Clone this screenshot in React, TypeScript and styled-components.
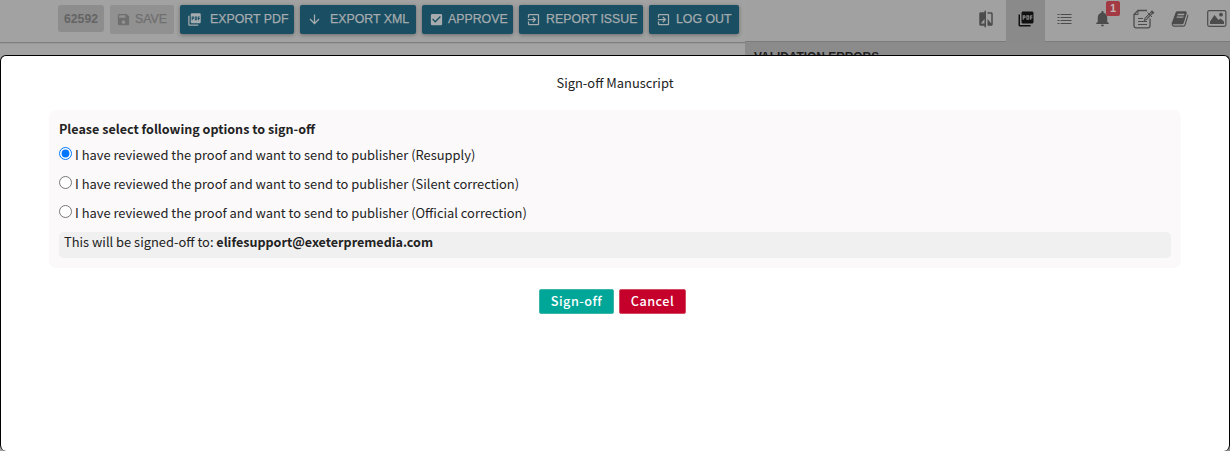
import React, { useState } from "react";
import styled, { createGlobalStyle, css } from "styled-components";
import {
  MdArrowDownward,
  MdCheckBox,
  MdCompare,
  MdExitToApp,
  MdNotifications,
  MdPictureAsPdf,
  MdSave,
} from "react-icons/md";

const sans = `"Liberation Sans", Arial, sans-serif`;
const humanist = `"Noto Sans CJK SC", "Noto Sans", sans-serif`;

const GlobalStyle = createGlobalStyle`
  *, *::before, *::after { box-sizing: border-box; }
  html, body { margin: 0; background: #a3a3a3; overflow: hidden; }
`;

const Page = styled.div`
  position: relative;
  display: grid;
  grid-template-columns: 745px 1fr;
  width: 1230px;
  height: 451px;
  overflow: hidden;
  background: #a3a3a3;
  font-family: ${sans};
`;

const EditorPane = styled.div`
  min-width: 0;
`;

const Toolbar = styled.div`
  display: flex;
  align-items: flex-start;
  height: 43px;
  padding: 5px 0 0 58px;
  border-bottom: 1px solid #7f7f7f;
  box-shadow: 0 1px 1px #999;
  background: #a2a2a2;
`;

const ArticleId = styled.span`
  width: 46px;
  height: 27px;
  margin-right: 6px;
  border-radius: 3px;
  background: #8d8d8d;
  color: #646464;
  font-size: 12.2px;
  font-weight: bold;
  line-height: 28px;
  text-align: center;
`;

const ToolButton = styled.button<{ $width: number; $gap?: number; $muted?: boolean }>`
  display: flex;
  align-items: center;
  gap: ${(p) => p.$gap ?? 5}px;
  width: ${(p) => p.$width}px;
  height: 29px;
  margin: 0 6px 0 0;
  padding: 0 0 2px ${(p) => (p.$muted ? 6 : 7)}px;
  border: 0;
  border-radius: 2px;
  background: #194e63;
  color: #a6abad;
  box-shadow: 0 1px 4px rgba(0, 0, 0, 0.35);
  font-family: ${sans};
  font-size: 12.35px;
  white-space: nowrap;
  -webkit-text-stroke: 0.25px currentColor;
  ${(p) =>
    p.$muted &&
    css`
      background: #919191;
      color: #6f6f6f;
      box-shadow: none;
    `}
  svg {
    flex: none;
    margin-top: 2px;
  }
`;

const SidePane = styled.div`
  background: #8b8b8b;
`;

const TabBar = styled.div`
  display: flex;
  height: 42px;
  padding-left: 222px;
  border-bottom: 1px solid #7c7c7c;
  background: #a1a1a1;
`;

const Tab = styled.div<{ $active?: boolean; $nudge?: number }>`
  position: relative;
  display: flex;
  flex: none;
  align-items: center;
  justify-content: center;
  width: 39px;
  height: ${(p) => (p.$active ? 42 : 37)}px;
  padding-bottom: ${(p) => (p.$active ? 5 : 0)}px;
  background: ${(p) => (p.$active ? "#8a8a8a" : "transparent")};
  color: ${(p) => (p.$active ? "#111" : "#4c4c4c")};
  svg {
    display: block;
    flex: none;
    margin-left: ${(p) => p.$nudge ?? 0}px;
  }
`;

const CountBadge = styled.span`
  position: absolute;
  top: 1px;
  left: 22px;
  width: 14px;
  height: 15px;
  border-radius: 2px;
  background: #a33943;
  color: #c5b5b6;
  font-size: 11px;
  font-weight: bold;
  line-height: 15px;
  text-align: center;
`;

const SideHeading = styled.div`
  padding: 8px 0 0 9px;
  color: #222;
  font-size: 11.9px;
  font-weight: bold;
  line-height: 15px;
`;

const Dialog = styled.section`
  position: absolute;
  inset: 55px 0 0;
  padding: 15px 48px 0;
  border: 1px solid #000;
  border-radius: 6px;
  border-bottom: 0;
  background: #fff;
  color: #222;
  font-family: ${humanist};
  font-size: 12.9px;
`;

const Title = styled.h1`
  margin: 0 0 15px;
  font-size: 12.9px;
  font-weight: 400;
  line-height: 24px;
  text-align: center;
`;

const OptionPanel = styled.div`
  height: 158px;
  padding: 9px 10px 0;
  border-radius: 7px;
  background: #fbf9fa;
`;

const Prompt = styled.div`
  height: 20px;
  font-size: 12.55px;
  font-weight: 700;
  line-height: 20px;
`;

const Option = styled.label`
  display: flex;
  align-items: flex-start;
  height: 29px;
  padding-top: 7px;
  line-height: 18px;
`;

const Radio = styled.input`
  width: 13px;
  height: 13px;
  margin: 1px 3px 0 0;
  accent-color: #0075ff;
`;

const Recipient = styled.div`
  height: 26px;
  margin-top: 6px;
  padding-left: 5px;
  border-radius: 5px;
  background: #f0f0f0;
  line-height: 20px;
  b { font-size: 12.55px; }
`;

const Actions = styled.div`
  display: flex;
  justify-content: center;
  gap: 5px;
  margin: 21px 5px 0 0;
`;

const ActionButton = styled.button<{ $danger?: boolean }>`
  width: ${(p) => (p.$danger ? 67 : 75)}px;
  height: 25px;
  padding: 0 0 2px;
  border: 1px solid ${(p) => (p.$danger ? "#d34a61" : "#3cb5a9")};
  border-radius: 2px;
  background: ${(p) => (p.$danger ? "#c5002b" : "#00a799")};
  color: #fff;
  font-family: ${humanist};
  font-size: 12.7px;
  font-weight: 500;
  letter-spacing: 0.45px;
  line-height: 21px;
`;

const ListIcon = () => (
  <svg width="15" height="12" viewBox="0 0 15 12" stroke="currentColor" strokeWidth="1.2">
    <path d="M0.500 1.500h2M0.500 4.500h2M0.500 7.500h2M0.500 10.500h2" />
    <path d="M3.500 1.500h11M3.500 4.500h11M3.500 7.500h11M3.500 10.500h11" />
  </svg>
);

const NoteIcon = () => (
  <svg width="22" height="20" viewBox="0 0 22 20" fill="none" stroke="currentColor">
    <path d="M14 1.500H5L1 5.500V17q0 1.800 1.800 1.800h12.400q1.800 0 1.800-1.800V9.500" strokeWidth="1.300" />
    <path d="M5 1.500v4H1" strokeWidth="1" />
    <path d="M5 9.500h5M5 12.500h9M5 15.500h9" strokeWidth="1.100" />
    <path d="M12.300 8.700l6.200-6.200M14 10.200l6.200-6.200M12.300 8.500l-1 3 3-1.200M13.200 9.500l6.300-6.300" strokeWidth="1" />
    <path d="M18.300 2l2.400 2.400" strokeWidth="2" />
    <path d="M14.500 3.500l4.500 4.500" strokeWidth="1" />
  </svg>
);

const BookIcon = () => (
  <svg width="18" height="18" viewBox="0 0 1792 1792" fill="currentColor">
    <path d="M1703 478q40 57 18 129l-275 906q-19 64-76.500 107.500t-122.500 43.500h-923q-77 0-148.500-53.500t-99.500-131.500q-24-67-2-127 0-4 3-27t4-37q1-8-3-21.500t-3-19.500q2-11 8-21t16.500-23.500 16.500-23.500q23-38 45-91.500t30-91.500q3-10 .5-30t-.5-28q3-11 17-28t17-23q21-36 42-92t25-90q1-9-2.500-32t.5-28q4-13 22-30.500t22-22.500q19-26 42.500-84.500t27.500-96.500q1-8-3-25.500t-2-26.500q2-8 9-18t18-23 17-21q8-12 16.500-30.500t15-35 16-36 19.500-32 26.500-23.500 36-11.500 47.500 5.500l-1 3q38-9 51-9h761q74 0 114 56t18 130l-274 906q-36 119-71.500 153.500t-128.500 34.500h-869q-27 0-38 15-11 16-1 43 24 70 144 70h923q29 0 56-15.500t35-41.500l300-987q7-22 5-57 38 15 59 43zm-1064 2q-4 13 2 22.500t20 9.500h608q13 0 25.500-9.500t16.500-22.500l21-64q4-13-2-22.500t-20-9.500h-608q-13 0-25.500 9.500t-16.500 22.500zm-83 256q-4 13 2 22.500t20 9.500h608q13 0 25.500-9.500t16.500-22.500l21-64q4-13-2-22.500t-20-9.500h-608q-13 0-25.500 9.500t-16.500 22.500z" />
  </svg>
);

const PictureIcon = () => (
  <svg width="20" height="17" viewBox="0 0 20 17" fill="currentColor">
    <rect x="0.700" y="0.700" width="18.200" height="15.600" rx="1.500" fill="none" stroke="currentColor" strokeWidth="1.200" />
    <circle cx="14" cy="4.700" r="1.900" />
    <path d="M3 14v-2.500L7.500 5l4 5L13.500 8.500 17 11.500V14z" />
  </svg>
);

const routes = ["Resupply", "Silent correction", "Official correction"];

export default function App() {
  const [selected, setSelected] = useState(routes[0]);

  return (
    <Page>
      <GlobalStyle />
      <EditorPane>
        <Toolbar>
          <ArticleId>62592</ArticleId>
          <ToolButton $width={64} $muted $gap={4}>
            <MdSave size={15} />
            SAVE
          </ToolButton>
          <ToolButton $width={114} $gap={8}>
            <MdPictureAsPdf size={15} />
            EXPORT PDF
          </ToolButton>
          <ToolButton $width={116} $gap={8}>
            <MdArrowDownward size={15} />
            EXPORT XML
          </ToolButton>
          <ToolButton $width={91} $gap={4}>
            <MdCheckBox size={15} />
            APPROVE
          </ToolButton>
          <ToolButton $width={124}>
            <MdExitToApp size={15} />
            REPORT ISSUE
          </ToolButton>
          <ToolButton $width={90}>
            <MdExitToApp size={15} />
            LOG OUT
          </ToolButton>
        </Toolbar>
      </EditorPane>
      <SidePane>
        <TabBar>
          <Tab $nudge={-1}><MdCompare size={18} /></Tab>
          <Tab $active><MdPictureAsPdf size={18} /></Tab>
          <Tab><ListIcon /></Tab>
          <Tab $nudge={-2}>
            <MdNotifications size={19} />
            <CountBadge>1</CountBadge>
          </Tab>
          <Tab $nudge={2}><NoteIcon /></Tab>
          <Tab $nudge={-4}><BookIcon /></Tab>
          <Tab $nudge={-7}><PictureIcon /></Tab>
        </TabBar>
        <SideHeading>VALIDATION ERRORS</SideHeading>
      </SidePane>

      <Dialog role="dialog" aria-labelledby="dialog-title">
        <Title id="dialog-title">Sign-off Manuscript</Title>
        <OptionPanel>
          <Prompt>Please select following options to sign-off</Prompt>
          {routes.map((route) => (
            <Option key={route}>
              <Radio
                type="radio"
                name="route"
                checked={selected === route}
                onChange={() => setSelected(route)}
              />
              I have reviewed the proof and want to send to publisher ({route})
            </Option>
          ))}
          <Recipient>
            This will be signed-off to: <b>elifesupport@exeterpremedia.com</b>
          </Recipient>
        </OptionPanel>
        <Actions>
          <ActionButton>Sign-off</ActionButton>
          <ActionButton $danger>Cancel</ActionButton>
        </Actions>
      </Dialog>
    </Page>
  );
}
